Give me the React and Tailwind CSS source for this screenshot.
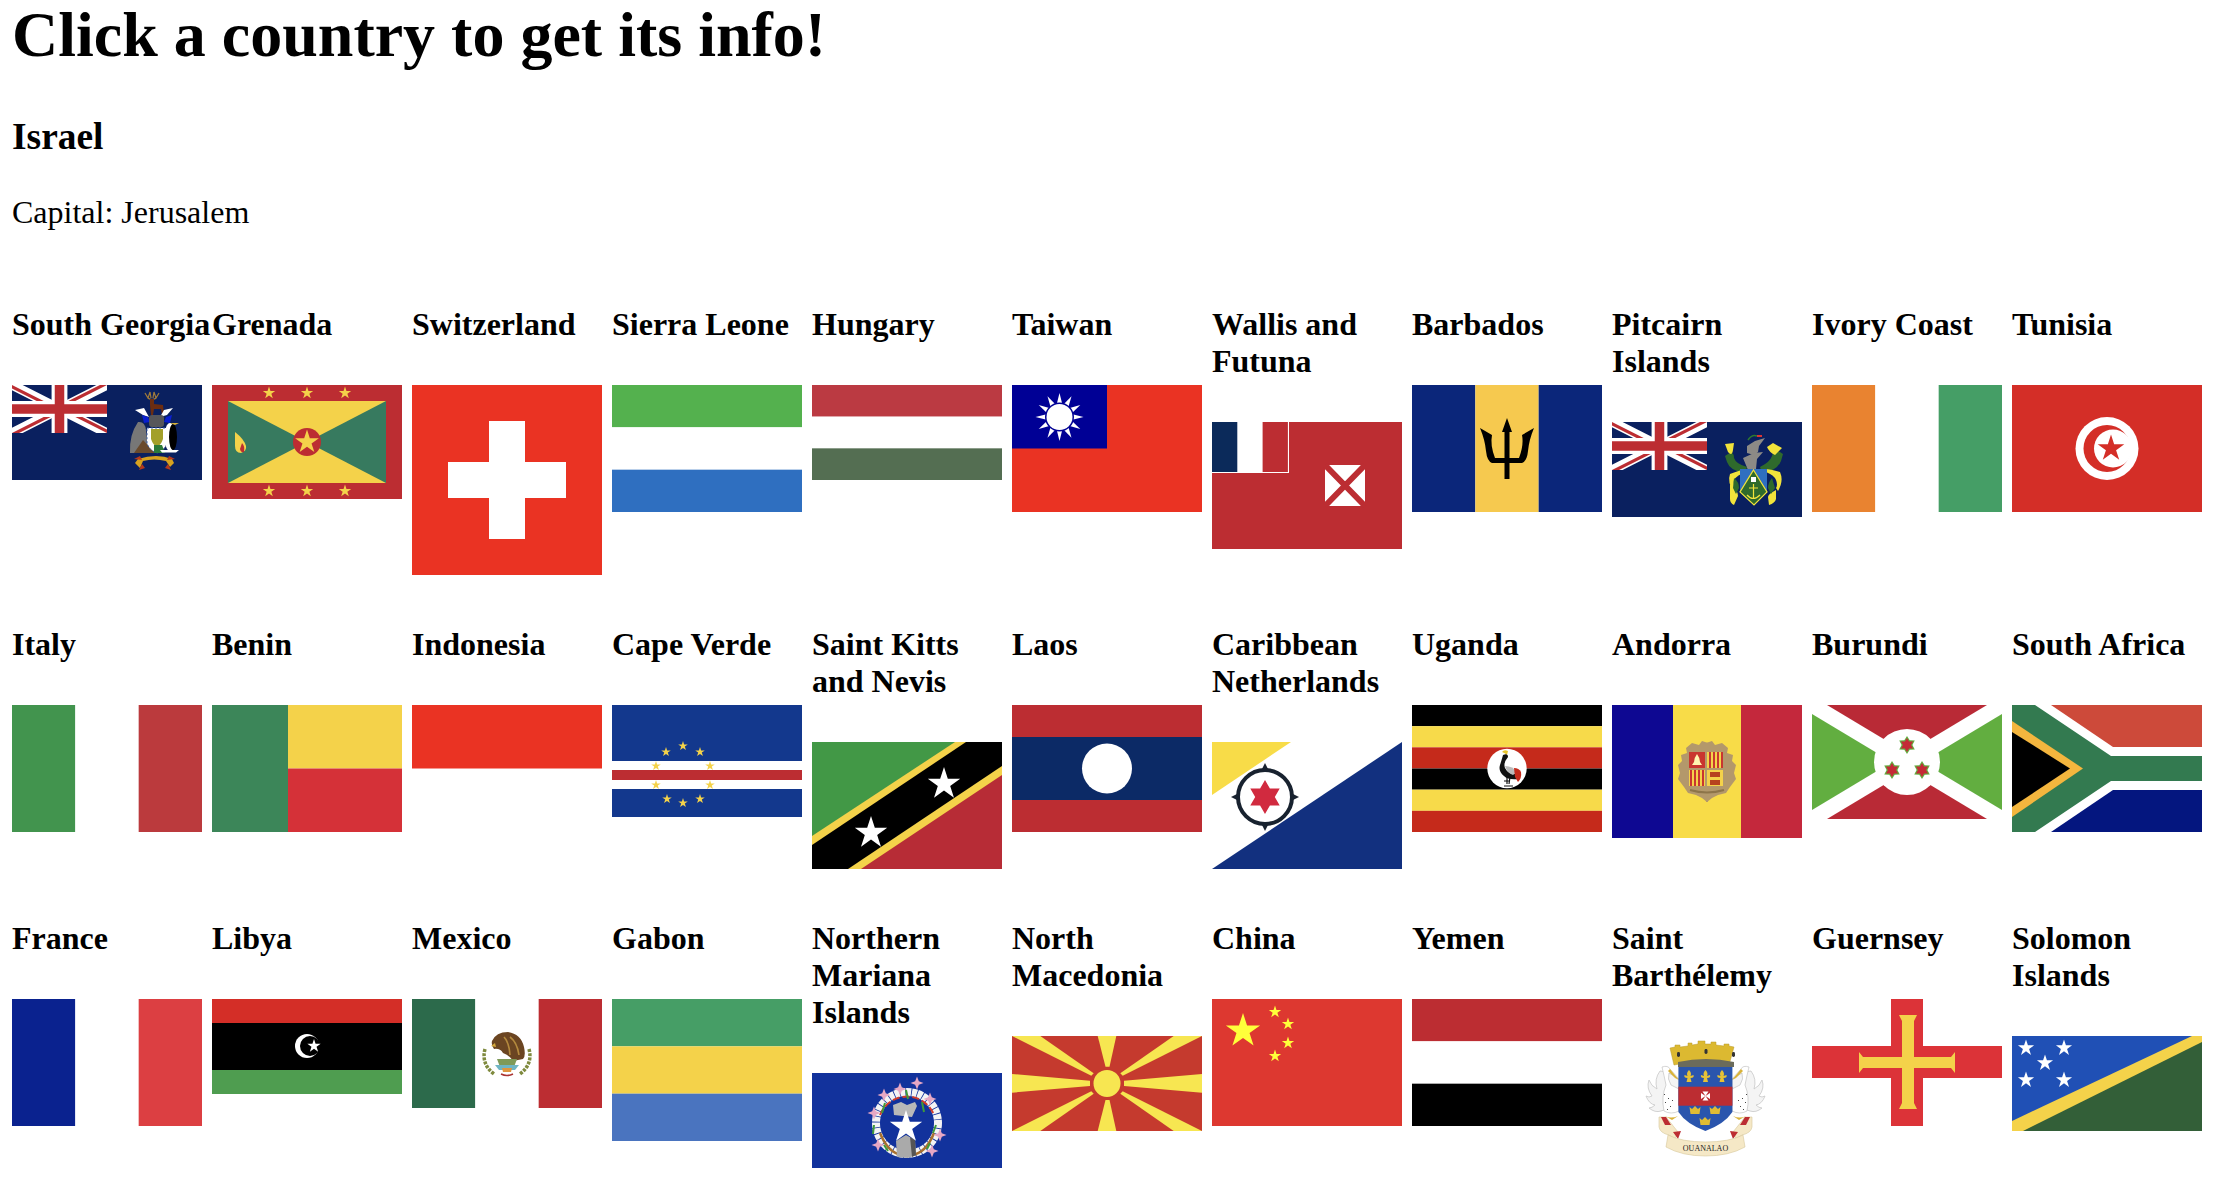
import React from 'react';

const RED = '#bc2d32';
const YELLOW = '#f4d24a';
const NAVY = '#0a205f';

const starPoints = (cx, cy, r, n = 5, inner = 0.382) => {
  const pts = [];
  for (let i = 0; i < n * 2; i++) {
    const rad = i % 2 === 0 ? r : r * inner;
    const a = -Math.PI / 2 + (i * Math.PI) / n;
    pts.push(`${(cx + rad * Math.cos(a)).toFixed(2)},${(cy + rad * Math.sin(a)).toFixed(2)}`);
  }
  return pts.join(' ');
};

const Star = ({ x, y, r, fill = YELLOW, n, inner }) => <polygon points={starPoints(x, y, r, n, inner)} fill={fill} />;

const Flag = ({ h, children }) => (
  <svg width="190" height={h} viewBox={`0 0 190 ${h}`} className="block">
    {children}
  </svg>
);

const Rect = ({ x = 0, y = 0, w = 190, h, fill }) => <rect x={x} y={y} width={w} height={h} fill={fill} />;

const HStripes = ({ total, colors }) => (
  <>
    {colors.map((c, i) => (
      <Rect key={i} y={(i * total) / colors.length} h={total / colors.length} fill={c} />
    ))}
  </>
);

const VStripes = ({ h, colors }) => (
  <>
    {colors.map((c, i) => (
      <Rect key={i} x={(i * 190) / 3} w={190 / 3} h={h} fill={c} />
    ))}
  </>
);

// draws the right half and its mirror around x=95
const Mirror = ({ children }) => (
  <>
    {children}
    <g transform="matrix(-1 0 0 1 190 0)">{children}</g>
  </>
);

const UnionJack = ({ id }) => (
  <svg x="0" y="0" width="95" height="48" viewBox="0 0 60 30" preserveAspectRatio="none">
    <clipPath id={id}>
      <path d="M30,15 h30 v15 z v15 h-30 z h-30 v-15 z v-15 h30 z" />
    </clipPath>
    <rect width="60" height="30" fill={NAVY} />
    <path d="M0,0 L60,30 M60,0 L0,30" stroke="#fff" strokeWidth="6" />
    <path d="M0,0 L60,30 M60,0 L0,30" stroke={RED} strokeWidth="4" clipPath={`url(#${id})`} />
    <path d="M30,0 v30 M0,15 h60" stroke="#fff" strokeWidth="10" />
    <path d="M30,0 v30 M0,15 h60" stroke={RED} strokeWidth="6" />
  </svg>
);

const SouthGeorgia = () => (
  <Flag h={95}>
    <Rect h={95} fill={NAVY} />
    <UnionJack id="uj-sg" />
    {/* stag */}
    <path d="M133,8 l3,5 2,-6 1,6 M147,8 l-3,5 -2,-6 -1,6 M136,13 q4,3 8,0" stroke="#a07a3a" strokeWidth="1.2" fill="none" />
    <path d="M138,14 h4 v5 l9,1 1,10 h-2 l-1,-6 h-7 l-1,6 h-2 l-1,-10z" fill="#6b2d12" />
    {/* wings */}
    <path d="M123,25 l9,-2 5,9 -6,-2z M161,23 l-9,2 -4,7 7,-2z" fill="#fff" />
    <path d="M130,30 l6,2 2,5 -6,1z M160,30 l-6,2 -2,5 6,1z" fill="#0a1fd0" />
    {/* lion */}
    <rect x="137" y="30" width="15" height="12" rx="3" fill="#56565a" />
    {/* seal */}
    <path d="M118,68 q-1,-18 8,-31 q7,-1 8,8 l3,23 z" fill="#777" />
    <path d="M122,68 l9,-13 12,13 z" fill="#6a4a2c" />
    {/* shield */}
    <path d="M135,43 h20 v15 q-2,7 -10,10 q-8,-3 -10,-10 z" fill="#fff" />
    <path d="M135,43 h20 v15 q-2,7 -10,10 q-8,-3 -10,-10 z" fill="none" stroke="#3b5fa8" strokeWidth="1" strokeDasharray="2 2" />
    <path d="M139,44 h12 v10 q-2,6 -6,8 q-4,-2 -6,-8 z" fill="#a3a02a" />
    <path d="M142,60 h8 l3,8 h-11z" fill="#2a7a3a" />
    {/* penguin */}
    <ellipse cx="158" cy="52" rx="5.5" ry="14" fill="#fff" />
    <ellipse cx="161" cy="52" rx="4" ry="13" fill="#000" />
    <path d="M158,38 h9 l-4,2z" fill="#d8b23a" />
    <path d="M148,65 h19 l-3,2.5 h-14z" fill="#fff" />
    {/* motto */}
    <path d="M126,74 q19,-6 34,0 l2,4 -4,4 -4,-6 q-12,-3 -23,0 l-3,7 -5,-5z" fill="#d7a21f" />
    <path d="M122,74 l6,-3 2,4z M163,74 l-6,-3 -2,4z M127,85 l3,-6 3,4z M159,85 l-3,-6 -3,4z" fill="#b53a1c" />
  </Flag>
);

const Grenada = () => (
  <Flag h={114}>
    <Rect h={114} fill={RED} />
    <Rect x={16} y={16} w={158} h={82} fill="#377a5f" />
    <polygon points="16,16 174,16 95,57" fill={YELLOW} />
    <polygon points="16,98 174,98 95,57" fill={YELLOW} />
    <circle cx="95" cy="57" r="14" fill={RED} />
    <Star x={95} y={57} r={12.5} />
    {[57, 95, 133].map((x) => (
      <React.Fragment key={x}>
        <Star x={x} y={8} r={6.5} />
        <Star x={x} y={106} r={6.5} />
      </React.Fragment>
    ))}
    <path d="M23,47 q9,7 11,14 q1,5 -5,7 q-6,0 -6,-7 z" fill={YELLOW} />
    <path d="M30,58 q3,3 2,9 q-3,1 -4,-3 z" fill={RED} />
  </Flag>
);

const Switzerland = () => (
  <Flag h={190}>
    <Rect h={190} fill="#ea3323" />
    <Rect x={36} y={77} w={118} h={36} fill="#fff" />
    <Rect x={77} y={36} w={36} h={118} fill="#fff" />
  </Flag>
);

const SierraLeone = () => (
  <Flag h={127}>
    <HStripes total={127} colors={['#54b14e', '#fff', '#2f6fc0']} />
  </Flag>
);

const Hungary = () => (
  <Flag h={95}>
    <HStripes total={95} colors={['#bb3a42', '#fff', '#546e52']} />
  </Flag>
);

const Taiwan = () => {
  const rays = [];
  for (let i = 0; i < 12; i++) rays.push(i * 30);
  return (
    <Flag h={127}>
      <Rect h={127} fill="#ea3323" />
      <Rect w={95} h={63.5} fill="#000095" />
      {rays.map((a) => (
        <polygon key={a} points="47.5,8 43.5,24 51.5,24" fill="#fff" transform={`rotate(${a} 47.5 32)`} />
      ))}
      <circle cx="47.5" cy="32" r="14.5" fill="#000095" />
      <circle cx="47.5" cy="32" r="13" fill="#fff" />
    </Flag>
  );
};

const Wallis = () => (
  <Flag h={127}>
    <Rect h={127} fill={RED} />
    <Rect w={77} h={51} fill="#fff" />
    <Rect w={25.3} h={50} fill="#0b2a5a" />
    <Rect x={50.6} w={25.3} h={50} fill={RED} />
    <Rect x={113} y={43} w={40} h={41} fill="#fff" />
    <path d="M113,43 L153,84 M153,43 L113,84" stroke={RED} strokeWidth="6" />
  </Flag>
);

const Barbados = () => (
  <Flag h={127}>
    <VStripes h={127} colors={['#0b267a', '#f6c94f', '#0b267a']} />
    <Mirror>
      <path d="M95,33 L100,47 H97.5 V73 H107 Q112,60 110,50 L122,43 Q117,55 116,66 Q115,76 110,78 H97.5 V94 H95z" fill="#000" />
    </Mirror>
  </Flag>
);

const Pitcairn = () => (
  <Flag h={95}>
    <Rect h={95} fill={NAVY} />
    <UnionJack id="uj-pn" />
    {/* crest */}
    <path d="M135,24 l8,-5 10,-3 -6,8 -1,6 -4,3 -7,-2z" fill="#8c8a86" />
    <path d="M136,18 q4,-6 9,-4" stroke="#2e7a2e" strokeWidth="1.5" fill="none" />
    <rect x="145" y="13" width="5" height="2" fill="#d33" />
    <path d="M131,36 l11,-5 9,-1 -6,7 -1,10 -8,1z" fill="#8c8a86" />
    {/* green dragons and yellow */}
    <path d="M113,34 q9,-7 9,2 q2,6 13,9 l-2,6 q-15,-2 -18,-11 z" fill="#2f6a2c" />
    <path d="M171,32 q-9,-7 -11,2 q-2,6 -12,11 l2,6 q15,-2 19,-12 z" fill="#2f6a2c" />
    <path d="M113,22 l9,-1 -1,7 q-1,7 -5,2 z M155,25 l6,-4 9,5 -7,7 q-6,-3 -8,-8 z" fill="#f2e33b" />
    <path d="M118,52 q10,-4 17,-5 l-1,3 q-9,3 -12,8 q-1,5 2,8 l-2,4 q-7,-10 -4,-18z" fill="#f2e33b" />
    <path d="M168,50 q-10,-3 -15,-3 l1,3 q8,3 10,8 q2,5 0,8 l2,3 q6,-10 2,-19z" fill="#f2e33b" />
    <path d="M118,62 q8,6 8,12 l-4,9 q-4,-2 -4,-6 z M164,68 q-8,4 -8,7 l1,8 q6,-2 7,-6 z" fill="#f2e33b" />
    <path d="M122,56 q5,4 5,10 l-3,6 -3,-6z M160,56 q-4,5 -4,10 l3,6 4,-6z" fill="#2f6a2c" />
    {/* shield */}
    <path d="M128,47 h27 v23 l-13,13 -14,-13z" fill="#2f6fc0" />
    <path d="M141.5,48 l13.5,22 -13,13 -14,-13z" fill="#2f6a2c" stroke="#f2e33b" strokeWidth="1.2" />
    <rect x="139" y="55" width="5" height="5" fill="#fff" />
    <path d="M141.5,62 v14 M137,66 h9 M135,73 q6,7 13,0" stroke="#f2e33b" strokeWidth="1.2" fill="none" />
  </Flag>
);

const IvoryCoast = () => (
  <Flag h={127}>
    <VStripes h={127} colors={['#e98330', '#fff', '#459e66']} />
  </Flag>
);

const Tunisia = () => (
  <Flag h={127}>
    <Rect h={127} fill="#d42e27" />
    <circle cx="95" cy="63.5" r="31.5" fill="#fff" />
    <circle cx="95" cy="63.5" r="23.5" fill="#d42e27" />
    <circle cx="101" cy="63.5" r="19" fill="#fff" />
    <Star x={99} y={63.5} r={14} fill="#d42e27" />
  </Flag>
);

const Italy = () => (
  <Flag h={127}>
    <VStripes h={127} colors={['#42944e', '#fff', '#bb3a3d']} />
  </Flag>
);

const Benin = () => (
  <Flag h={127}>
    <Rect x={76} w={114} h={63.5} fill={YELLOW} />
    <Rect x={76} y={63.5} w={114} h={63.5} fill="#d53138" />
    <Rect w={76} h={127} fill="#3c8659" />
  </Flag>
);

const Indonesia = () => (
  <Flag h={127}>
    <Rect h={63.5} fill="#ea3323" />
  </Flag>
);

const CapeVerde = () => {
  const stars = [[71, 41], [54, 47], [88, 47], [44, 61], [98, 61], [44, 80], [98, 80], [55, 94], [88, 94], [71, 98]];
  return (
    <Flag h={112}>
      <Rect h={112} fill="#13388d" />
      <Rect y={56} h={28} fill="#fff" />
      <Rect y={65} h={10} fill={RED} />
      {stars.map(([x, y]) => (
        <Star key={`${x}-${y}`} x={x} y={y} r={5} />
      ))}
    </Flag>
  );
};

const SaintKitts = () => (
  <Flag h={127}>
    <polygon points="0,0 190,0 0,127" fill="#429846" />
    <polygon points="190,127 190,0 0,127" fill="#b72c36" />
    <polygon points="143,0 190,0 190,33 49,127 0,127 0,94" fill={YELLOW} />
    <polygon points="154,0 190,0 190,24 36,127 0,127 0,103" fill="#000" />
    <Star x={59} y={91} r={17} fill="#fff" />
    <Star x={132} y={42} r={17} fill="#fff" />
  </Flag>
);

const Laos = () => (
  <Flag h={127}>
    <Rect h={127} fill={RED} />
    <Rect y={32} h={63} fill="#0c2a66" />
    <circle cx="95" cy="63.5" r="25" fill="#fff" />
  </Flag>
);

const Caribbean = () => (
  <Flag h={127}>
    <polygon points="0,0 79,0 0,53" fill="#f8dc48" />
    <polygon points="190,0 190,127 0,127" fill="#12307f" />
    <circle cx="53" cy="55" r="27" fill="#fff" stroke="#18222f" strokeWidth="4" />
    <path d="M53,21 l4,8 h-8z M53,89 l4,-8 h-8z M19,55 l8,4 v-8z M87,55 l-8,4 v-8z" fill="#18222f" />
    <Star x={53} y={55} r={17} fill="#d12a3f" n={6} inner={0.577} />
  </Flag>
);

const Uganda = () => (
  <Flag h={127}>
    <HStripes total={127} colors={['#000', '#f7da4a', '#c52a1b', '#000', '#f7da4a', '#c52a1b']} />
    <circle cx="95" cy="63.5" r="19.7" fill="#fff" />
    {/* crane */}
    <path d="M90,47 q2,-3 6,-1 l-1,4 q-2,-2 -5,-3z" fill="#e9c62d" />
    <path d="M91,50 q5,-2 5,2 q-5,6 -3,11 q3,6 10,6 l3,5 q-10,1 -14,-3 q-6,-5 -4,-11 q2,-6 3,-10z" fill="#111" />
    <path d="M93,61 q8,0 12,6 l-4,3 q-6,-2 -8,-9z" fill="#bbb" />
    <path d="M102,63 q5,0 7,4 q1,6 -3,10 l-3,-5 z" fill="#c52a1b" />
    <path d="M95,72 v7 M98,72 l-1,7 M92,81 h9 M92,76 h5" stroke="#111" strokeWidth="1.2" fill="none" />
  </Flag>
);

const Andorra = () => (
  <Flag h={133}>
    <Rect w={61} h={133} fill="#0e0892" />
    <Rect x={61} w={68} h={133} fill="#f8dc48" />
    <Rect x={129} w={61} h={133} fill="#c4283c" />
    <Mirror>
      <path
        d="M94,38 L100,36 L103,40 L110,38 L116,43 L115,48 L121,50 L120,56 L124,60 L122,68 L124,74 L118,82 L114,88 L106,90 L100,93 L95,97 L94,97z"
        fill="#b3986b"
      />
    </Mirror>
    <Rect x={77} y={47} w={16} h={16} fill="#c9362f" />
    <path d="M85,49 q3,4 3,8 l2,3 h-10 l2,-3 q0,-4 3,-8z" fill="#fff6b0" />
    <Rect x={95} y={47} w={16} h={16} fill={YELLOW} />
    <Rect x={77} y={65} w={16} h={16} fill={YELLOW} />
    <path d="M98,47 v16 M102,47 v16 M106,47 v16 M110,47 v16 M79,65 v16 M83,65 v16 M87,65 v16 M91,65 v16" stroke="#c9362f" strokeWidth="2" />
    <Rect x={95} y={65} w={16} h={16} fill={YELLOW} />
    <path d="M98,67 h10 v5 h-10z M98,75 h10 v5 h-10z" fill="#b7421f" />
    <path d="M78,85 q17,5 34,0" stroke="#8d7449" strokeWidth="2" fill="none" />
  </Flag>
);

const Burundi = () => (
  <Flag h={114}>
    <polygon points="15,0 175,0 95,48" fill="#b92a36" />
    <polygon points="15,114 175,114 95,66" fill="#b92a36" />
    <polygon points="0,9 0,105 80,57" fill="#62ae40" />
    <polygon points="190,9 190,105 110,57" fill="#62ae40" />
    <circle cx="95" cy="57" r="33" fill="#fff" />
    {[[95, 40], [80, 65], [110, 65]].map(([x, y]) => (
      <React.Fragment key={x}>
        <Star x={x} y={y} r={9} fill="#62ae40" n={6} inner={0.6} />
        <Star x={x} y={y} r={7} fill="#c42b36" n={6} inner={0.577} />
      </React.Fragment>
    ))}
  </Flag>
);

const SouthAfrica = () => (
  <Flag h={127}>
    <polygon points="39,0 190,0 190,42 101,42" fill="#cd4a3a" />
    <polygon points="39,127 101,85 190,85 190,127" fill="#04167f" />
    <polygon points="0,0 23,0 99,51 190,51 190,76 99,76 23,127 0,127" fill="#337a50" />
    <polygon points="0,16 71,63.5 0,112" fill="#f4b63e" />
    <polygon points="0,27 58,63.5 0,102" fill="#000" />
  </Flag>
);

const France = () => (
  <Flag h={127}>
    <VStripes h={127} colors={['#0a228f', '#fff', '#dc3f42']} />
  </Flag>
);

const Libya = () => (
  <Flag h={95}>
    <Rect h={24} fill="#d42e27" />
    <Rect y={24} h={47} fill="#000" />
    <Rect y={71} h={24} fill="#4f9d50" />
    <circle cx="95" cy="47" r="12" fill="#fff" />
    <circle cx="98" cy="47" r="10" fill="#000" />
    <Star x={102} y={47} r={7} fill="#fff" />
  </Flag>
);

const Mexico = () => (
  <Flag h={109}>
    <VStripes h={109} colors={['#2c6a4b', '#fff', '#bc2d32']} />
    {/* eagle */}
    <path d="M80,42 q4,-9 16,-9 q13,2 16,15 q2,9 -1,12 l-10,2 q-4,-6 -10,-8 q-3,-5 -9,-4 q-3,-4 -2,-8z" fill="#6b4522" />
    <path d="M98,38 q7,5 9,18 M92,38 q5,5 6,18" stroke="#b48a3e" strokeWidth="1.6" fill="none" />
    <path d="M83,44 l-4,3 5,1z" fill="#d4a93c" />
    {/* wreath */}
    <path d="M73,50 q-4,15 9,25 M117,50 q4,15 -9,25" stroke="#7f8a3e" strokeWidth="3.5" fill="none" strokeDasharray="3 1.2" />
    {/* cactus and water */}
    <path d="M85,60 h20 l-3,8 h-14z" fill="#7f9a58" />
    <path d="M83,66 h24 l-4,5 h-16z" fill="#6fb5c4" />
    <path d="M90,69 h10 l-1,4 h-8z" fill="#e0963e" />
    <path d="M89,75 q6,3 12,0" stroke="#a33" strokeWidth="1.6" fill="none" />
  </Flag>
);

const Gabon = () => (
  <Flag h={142}>
    <HStripes total={142} colors={['#469e66', YELLOW, '#4a74bf']} />
  </Flag>
);

const NorthernMariana = () => (
  <Flag h={95}>
    <Rect h={95} fill="#12329c" />
    <circle cx="95" cy="50" r="31" fill="none" stroke="#f4f4f4" strokeWidth="8" strokeDasharray="5 0.8" />
    <path d="M68,42 A29,29 0 0 1 122,42" stroke="#d23b2a" strokeWidth="2" strokeDasharray="7 3" fill="none" />
    <path d="M68,60 q8,20 22,22 M122,60 q-8,20 -22,22" stroke="#a8702f" strokeWidth="2.5" fill="none" />
    {[[72, 22], [88, 16], [105, 10], [118, 26], [62, 40], [128, 62], [66, 72], [120, 78]].map(([x, y]) => (
      <Star key={x} x={x} y={y} r={6.5} fill="#e7a8c4" n={4} inner={0.4} />
    ))}
    <path d="M82,42 l-1,-10 8,-3 6,3 8,-3 2,4 -5,11z" fill="#b8b8b8" />
    <path d="M84,68 l10,-6 9,5 1,15 -8,3 -11,-1z" fill="#aaa" />
    <path d="M98,64 l5,3 1,15 -4,2z" fill="#555" />
    <Star x={94} y={54} r={17} fill="#fff" />
    <path d="M73,30 l-3,10 M96,26 l-2,-9 M110,29 l2,10 M62,52 l-1,9 M124,52 l-3,8 M72,72 l4,6 M118,70 l-3,6" stroke="#3f9a3a" strokeWidth="2" />
  </Flag>
);

const NorthMacedonia = () => (
  <Flag h={95}>
    <Rect h={95} fill="#c53a2e" />
    <g fill="#f7e651">
      <polygon points="78,44.7 0,38 0,56.7 78,50" />
      <polygon points="112,44.7 190,38 190,56.7 112,50" />
      <polygon points="93.5,30.7 85.7,0 104.3,0 97.5,30.7" />
      <polygon points="93.5,64 85.7,95 104.3,95 97.5,64" />
      <polygon points="0,0 28.3,0 81.7,37.3 79.3,39.7" />
      <polygon points="190,0 161.7,0 108.3,37.3 110.7,39.7" />
      <polygon points="0,95 28.3,95 81.7,57.7 79.3,55.3" />
      <polygon points="190,95 161.7,95 108.3,57.7 110.7,55.3" />
      <circle cx="95" cy="47.4" r="13.5" />
    </g>
  </Flag>
);

const China = () => (
  <Flag h={127}>
    <Rect h={127} fill="#dd3830" />
    <Star x={31} y={32} r={18} fill="#ffff3a" />
    <Star x={63} y={13} r={6.5} fill="#ffff3a" />
    <Star x={76} y={25} r={6.5} fill="#ffff3a" />
    <Star x={76} y={44} r={6.5} fill="#ffff3a" />
    <Star x={63} y={57} r={6.5} fill="#ffff3a" />
  </Flag>
);

const Yemen = () => (
  <Flag h={127}>
    <HStripes total={127} colors={[RED, '#fff', '#000']} />
  </Flag>
);

const SaintBarth = () => (
  <Flag h={127}>
    {/* pelicans */}
    {[0, 1].map((side) => (
      <g key={side} transform={side ? 'matrix(-1 0 0 1 187 0)' : undefined}>
        <path d="M48,35 q-6,8 -3,18 q-6,-3 -8,-9 q-3,8 3,16 q-3,2 -6,0 q3,8 9,9 q-3,3 -6,3 q6,5 12,3 l6,-2 q8,-3 12,-5 v-24 q-5,-6 -12,-8z" fill="#f4f4f4" stroke="#c8c8c8" strokeWidth="0.8" />
        <path d="M50,31 q6,-2 8,2 l9,10 -10,-6 q-2,6 2,12 l8,4 v22 q-8,4 -15,0 q-3,-14 2,-26 q-2,-10 -4,-18z" fill="#fff" stroke="#bbb" strokeWidth="0.6" />
        <path d="M58,33 l9,11 -4,-2 -7,-7z" fill="#d9b33a" />
        <path d="M53,80 q6,3 13,0 l-6,4z" fill="#d9b33a" />
        <path d="M52,58 l1,1 M56,62 l1,1 M53,66 l1,1 M58,70 l1,1 M55,73 l1,1 M60,64 l1,1" stroke="#333" strokeWidth="0.9" />
      </g>
    ))}
    {/* ribbon */}
    <path d="M47,81 h7 l12,15 -3,7 -6,-4 q-9,-2 -10,-8z M140,81 h-7 l-12,15 3,7 6,-4 q9,-2 10,-8z" fill="#f5e8c6" stroke="#d7c79b" strokeWidth="0.6" />
    <path d="M49,81 h5 l5,8 -6,0z M138,81 h-5 l-5,8 6,0z M61,96 l8,-1 -3,8z M126,96 l-8,-1 3,8z" fill={RED} />
    <path d="M56,99 q14,7 37.5,7 q23.5,0 37.5,-7 l2,12 q-16,9 -39.5,9 q-23.5,0 -39.5,-9z" fill="#f5e8c6" stroke="#d7c79b" strokeWidth="0.6" />
    <text x="93.5" y="115" textAnchor="middle" fontSize="8" fontFamily="'Liberation Serif', serif" fill="#222">OUANALAO</text>
    {/* crown */}
    <path d="M58,12 l5,-1 v-2 h5 v2 l8,-1 0,-3 h4 v2 l6,-1 v-3 h7 v3 l6,0 v-2 h5 v3 l8,1 v-2 h5 v2 l5,1 -5,18 q-25,-7 -55,0z" fill="#dcb931" stroke="#b9992a" strokeWidth="0.5" />
    <rect x="65" y="16" width="3" height="5" rx="1.4" fill="#333" />
    <rect x="92.5" y="13" width="3" height="5" rx="1.4" fill="#333" />
    <rect x="120" y="16" width="3" height="5" rx="1.4" fill="#333" />
    <path d="M66,26 q28,-6 56,0 v5 h-56z" fill="#6b6b5b" />
    {/* shield */}
    <path d="M66.4,31 h54 v45 q-8,12 -27,19 q-19,-7 -27,-19z" fill="#2a55ad" />
    <Rect x={66.4} y={50.7} w={54} h={19} fill={RED} />
    {[77, 93.5, 110].map((x) => (
      <path key={x} d="M0,-7 q3,3 1.5,6 l3,-1 q1,3 -3,3 l1,4 h-5 l1,-4 q-4,0 -3,-3 l3,1 q-1.5,-3 1.5,-6z" transform={`translate(${x} 41)`} fill="#e6c236" />
    ))}
    <path d="M93.5,60 l-3,-4.5 h6z M93.5,60 l-3,4.5 h6z M93.5,60 l-4.5,-3 v6z M93.5,60 l4.5,-3 v6z" fill="#fff" />
    {[[83, 75], [103, 75], [93, 86]].map(([x, y]) => (
      <path key={x} d="M-5.5,-4 l2.5,2 3,-3 3,3 2.5,-2 -1,7 h-9z" transform={`translate(${x} ${y})`} fill="#e0bc34" />
    ))}
  </Flag>
);

const Guernsey = () => (
  <Flag h={127}>
    <Rect x={79} w={32} h={127} fill="#dc3338" />
    <Rect y={47} h={32} fill="#dc3338" />
    <Rect x={90} y={16} w={12} h={94} fill={YELLOW} />
    <Rect x={47} y={58} w={96} h={11} fill={YELLOW} />
    <path d="M87,16 h18 l-3,6 h-12z M87,110 h18 l-3,-6 h-12z M47,53 v21 l4,-5 v-11z M143,53 v21 l-4,-5 v-11z" fill={YELLOW} />
  </Flag>
);

const Solomon = () => (
  <Flag h={95}>
    <polygon points="0,0 190,0 0,95" fill="#2050b5" />
    <polygon points="190,0 190,95 0,95" fill="#335f38" />
    <polygon points="180,0 190,0 190,6 11,95 0,95 0,85" fill={YELLOW} />
    {[[14, 12], [52, 12], [33, 27], [14, 44], [52, 44]].map(([x, y]) => (
      <Star key={`${x}-${y}`} x={x} y={y} r={8.5} fill="#fff" />
    ))}
  </Flag>
);

const countries = [
  { name: 'South Georgia', flag: SouthGeorgia },
  { name: 'Grenada', flag: Grenada },
  { name: 'Switzerland', flag: Switzerland },
  { name: 'Sierra Leone', flag: SierraLeone },
  { name: 'Hungary', flag: Hungary },
  { name: 'Taiwan', flag: Taiwan },
  { name: 'Wallis and Futuna', flag: Wallis },
  { name: 'Barbados', flag: Barbados },
  { name: 'Pitcairn Islands', flag: Pitcairn },
  { name: 'Ivory Coast', flag: IvoryCoast },
  { name: 'Tunisia', flag: Tunisia },
  { name: 'Italy', flag: Italy },
  { name: 'Benin', flag: Benin },
  { name: 'Indonesia', flag: Indonesia },
  { name: 'Cape Verde', flag: CapeVerde },
  { name: 'Saint Kitts and Nevis', flag: SaintKitts },
  { name: 'Laos', flag: Laos },
  { name: 'Caribbean Netherlands', flag: Caribbean },
  { name: 'Uganda', flag: Uganda },
  { name: 'Andorra', flag: Andorra },
  { name: 'Burundi', flag: Burundi },
  { name: 'South Africa', flag: SouthAfrica },
  { name: 'France', flag: France },
  { name: 'Libya', flag: Libya },
  { name: 'Mexico', flag: Mexico },
  { name: 'Gabon', flag: Gabon },
  { name: 'Northern Mariana Islands', flag: NorthernMariana },
  { name: 'North Macedonia', flag: NorthMacedonia },
  { name: 'China', flag: China },
  { name: 'Yemen', flag: Yemen },
  { name: 'Saint Barthélemy', flag: SaintBarth },
  { name: 'Guernsey', flag: Guernsey },
  { name: 'Solomon Islands', flag: Solomon },
];

export default function App() {
  return (
    <div className="min-h-[1192px] bg-white pl-3 text-[32px] leading-[37px] text-black font-['Liberation_Serif',serif]">
      <h1 className="text-[64px] leading-[69px] font-bold">Click a country to get its info!</h1>
      <h3 className="mt-[46px] text-[37.44px] leading-[43px] font-bold">Israel</h3>
      <p className="mt-[36px]">Capital: Jerusalem</p>

      <div className="mt-[75px] grid grid-cols-[repeat(11,200px)] gap-y-[51px]">
        {countries.map((c) => (
          <div key={c.name} className="flex flex-col">
            <p className="mb-[42px] font-bold">{c.name}</p>
            <c.flag />
          </div>
        ))}
      </div>
    </div>
  );
}
